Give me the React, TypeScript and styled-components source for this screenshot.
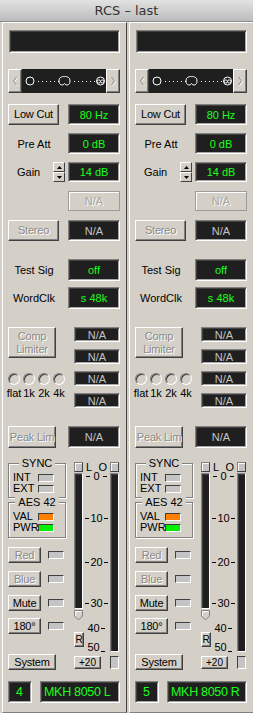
import React from "react";
import styled, { createGlobalStyle } from "styled-components";

const Global = createGlobalStyle`
  html, body { margin: 0; padding: 0; background: #d4d0c8; }
  body {
    width: 253px; height: 713px; overflow: hidden;
    font-family: "Liberation Sans", Arial, sans-serif; font-size: 11px; color: #000;
  }
  * { box-sizing: border-box; }
`;

const Window = styled.div`
  width: 253px; height: 713px; display: flex; flex-direction: column; background: #d4d0c8;
`;

const TitleBar = styled.div`
  height: 22px; flex: none;
  background: linear-gradient(#e2e2e2, #bcbcbc);
  border-bottom: 1px solid #8a8a8a;
  display: flex; align-items: center; justify-content: center;
  font-family: "DejaVu Sans", sans-serif; font-size: 13px; color: #333;
  padding-bottom: 1px;
`;

const Body = styled.div`
  flex: 1; display: flex;
`;

const Panel = styled.div`
  margin-left: 2px; width: 125px; height: 100%;
  border-left: 1px solid #fff; border-top: 1px solid #fff;
  border-right: 1px solid #404040; border-bottom: 1px solid #808080;
  padding: 7px 6px 0 5px;
  display: flex; flex-direction: column;
`;

const Row = styled.div<{ $mt: number; $end?: boolean }>`
  display: flex; align-items: center;
  justify-content: ${(p) => (p.$end ? "flex-end" : "space-between")};
  margin-top: ${(p) => p.$mt}px;
`;

const Display = styled.div<{ $w?: number; $h?: number; $dim?: boolean; $left?: boolean; $big?: boolean }>`
  width: ${(p) => p.$w ?? 52}px; height: ${(p) => p.$h ?? 21}px; flex: none;
  background: #1f1f1f;
  border: 1px solid; border-color: #808080 #fff #fff #808080;
  box-shadow: inset 1px 1px #404040, inset -1px -1px #a8a8a8;
  color: ${(p) => (p.$dim ? "#c4c4c4" : "#19ff19")};
  display: flex; align-items: center;
  justify-content: ${(p) => (p.$left ? "flex-start" : "center")};
  padding-left: ${(p) => (p.$left ? "3px" : "0")};
  font-size: ${(p) => (p.$big ? "12.5px" : "11px")};
  letter-spacing: ${(p) => (p.$big ? "-0.3px" : "0")};
  white-space: nowrap;
`;

const NameBox = styled(Display)`
  margin-left: 1px;
`;

const GhostBox = styled.div`
  width: 52px; height: 20px;
  border: 1px solid #9c9c9c;
  box-shadow: inset 1px 1px #fff;
  color: #a4a4a4; text-shadow: 1px 1px 0 #fff;
  display: flex; align-items: center; justify-content: center;
`;

const Btn = styled.button<{ $w: number; $h: number; $off?: boolean; $fs?: number }>`
  width: ${(p) => p.$w}px; height: ${(p) => p.$h}px; flex: none;
  margin: 0; padding: 0;
  background: #d4d0c8;
  border: 1px solid; border-color: #fff #404040 #404040 #fff;
  box-shadow: inset -1px -1px #808080;
  font-family: "Liberation Sans", Arial, sans-serif;
  font-size: ${(p) => p.$fs ?? 11}px; line-height: 13px;
  letter-spacing: -0.2px;
  white-space: nowrap;
  color: ${(p) => (p.$off ? "#8a8a8a" : "#000")};
  text-shadow: ${(p) => (p.$off ? "1px 1px 0 #fff" : "none")};
  display: flex; flex-direction: column; align-items: center; justify-content: center;
`;

const Label = styled.div`
  width: 52px; text-align: center;
`;

const GainGroup = styled.div`
  width: 57px; display: flex; align-items: center; justify-content: space-between;
  padding-left: 9px;
`;

const Spinner = styled.div`
  width: 12px; height: 20px; display: flex; flex-direction: column;
`;

const SpinHalf = styled.div`
  flex: 1; background: #d4d0c8;
  border: 1px solid; border-color: #fff #404040 #404040 #fff;
  display: flex; align-items: center; justify-content: center;
`;

const SliderRow = styled.div`
  margin-top: 16px; height: 24px; display: flex;
`;

const ArrowBtn = styled.div`
  width: 14px; height: 24px; background: #d4d0c8;
  border: 1px solid; border-color: #fff #404040 #404040 #fff;
  box-shadow: inset -1px -1px #808080;
  display: flex; align-items: center; justify-content: center;
`;

const SliderTrack = styled.div`
  width: 84px; height: 24px; background: #1f1f1f;
`;

const CompBlock = styled.div`
  margin-top: 18px; display: flex; justify-content: space-between;
`;

const CompLeft = styled.div`
  display: flex; flex-direction: column;
`;

const CompRight = styled.div`
  display: flex; flex-direction: column; gap: 7px;
`;

const Radios = styled.div`
  margin-top: 15px; display: flex; gap: 3px;
`;

const RadioItem = styled.div`
  width: 12px; display: flex; flex-direction: column; align-items: center;
`;

const Radio = styled.div`
  width: 12px; height: 12px; border-radius: 50%;
  border: 1px solid; border-color: #808080 #fff #fff #808080;
  box-shadow: inset 1px 1px #404040;
  background: #d4d0c8;
`;

const RadioLabel = styled.div`
  margin-top: 2px; line-height: 12px; white-space: nowrap;
`;

const LowerBlock = styled.div`
  margin-top: 11px; display: flex; gap: 6px; height: 211px;
`;

const LeftCol = styled.div`
  width: 58px; display: flex; flex-direction: column;
`;

const Group = styled.div<{ $mt: number; $h: number }>`
  margin-top: ${(p) => p.$mt}px; height: ${(p) => p.$h}px;
  border: 1px solid #808080;
  box-shadow: inset 1px 1px #fff, 1px 1px #fff;
  display: flex; flex-direction: column; padding: 0 0 0 4px;
`;

const Legend = styled.div`
  align-self: center; margin-top: -7px; margin-left: -4px;
  padding: 0 3px; line-height: 12px; background: #d4d0c8;
`;

const GroupRows = styled.div`
  margin-top: 3px; display: flex; flex-direction: column;
`;

const GroupRow = styled.div`
  height: 11px; display: flex; align-items: center;
`;

const GroupLabel = styled.div`
  width: 25px; line-height: 11px;
`;

const Indicator = styled.div<{ $c?: string; $w?: number; $h?: number }>`
  width: ${(p) => p.$w ?? 16}px; height: ${(p) => p.$h ?? 8}px; flex: none;
  background: ${(p) => p.$c ?? "#c4c4c4"};
  border: 1px solid; border-color: #404040 #fff #fff #404040;
`;

const BtnRow = styled.div<{ $mt: number }>`
  margin-top: ${(p) => p.$mt}px; display: flex; align-items: center; gap: 7px;
`;

const Meter = styled.div`
  width: 48px; display: grid;
  grid-template-columns: 2px 9px 27px 9px;
  grid-template-rows: 10px 179px 13px;
  row-gap: 0;
  padding-top: 3px;
`;

const TopSquare = styled.div<{ $col: number }>`
  grid-column: ${(p) => p.$col}; grid-row: 1;
  width: 9px; height: 10px; background: #c4c4c4;
  border: 1px solid; border-color: #808080 #404040 #404040 #808080;
  box-shadow: inset 1px 1px #fff;
`;

const LOHead = styled.div`
  grid-column: 3; grid-row: 1;
  display: flex; justify-content: space-between; padding: 0 3px;
  line-height: 10px; font-size: 11px;
`;

const LeftStack = styled.div`
  grid-column: 2; grid-row: 2; margin-top: 1px;
  display: flex; flex-direction: column; align-items: flex-start;
`;

const Bar = styled.div<{ $h: number }>`
  width: 9px; height: ${(p) => p.$h}px; background: #1f1f1f;
  border: 1px solid; border-color: #808080 #fff #fff #808080;
  box-shadow: inset 1px 1px #404040;
`;

const RightBar = styled(Bar)`
  grid-column: 4; grid-row: 2; margin-top: 1px;
`;

const Scale = styled.div`
  grid-column: 3; grid-row: 2; position: relative; margin-top: 1px;
`;

const Mark = styled.div`
  position: absolute; left: 0; right: 0; height: 12px;
  display: flex; align-items: center; justify-content: center;
  line-height: 12px; font-size: 11px; white-space: nowrap;
`;

const Tick = styled.span<{ $bottom?: boolean }>`
  display: inline-block; width: 4px; height: 1px; background: #000;
  margin: 0 1px;
  align-self: ${(p) => (p.$bottom ? "flex-end" : "center")};
  margin-bottom: ${(p) => (p.$bottom ? "1px" : "0")};
`;

const SmallBtn = styled.div<{ $w: number; $h: number }>`
  width: ${(p) => p.$w}px; height: ${(p) => p.$h}px; background: #d4d0c8;
  border: 1px solid; border-color: #fff #404040 #404040 #fff;
  box-shadow: inset -1px -1px #808080;
  display: flex; align-items: center; justify-content: center;
  font-size: 10px; line-height: 10px;
`;

const PlusBtn = styled(SmallBtn)`
  grid-column: 2 / span 2; grid-row: 3; margin-top: 5px;
`;

const CornerBox = styled(Indicator)`
  grid-column: 4; grid-row: 3; margin-top: 5px;
`;

const BottomRow = styled.div`
  margin-top: 11px; display: flex; justify-content: space-between;
`;

const Chevron = ({ left }: { left?: boolean }) => (
  <svg width="6" height="10" viewBox="0 0 6 10">
    <polyline
      points={left ? "4.5,1 1.5,5 4.5,9" : "1.5,1 4.5,5 1.5,9"}
      fill="none" stroke="#fff" strokeWidth="1" transform="translate(1,1)"
    />
    <polyline
      points={left ? "4.5,1 1.5,5 4.5,9" : "1.5,1 4.5,5 1.5,9"}
      fill="none" stroke="#8a8a8a" strokeWidth="1"
    />
  </svg>
);

const Tri = ({ up }: { up?: boolean }) => (
  <svg width="5" height="3" viewBox="0 0 5 3">
    <polygon points={up ? "2.5,0 5,3 0,3" : "0,0 5,0 2.5,3"} fill="#000" />
  </svg>
);

const PolarPattern = () => {
  const dots1 = [16, 20, 24, 28, 32, 36];
  const dots2 = [52, 56, 60, 64, 68, 72];
  return (
    <svg width="84" height="24" viewBox="0 0 84 24">
      <circle cx="8" cy="12" r="4" fill="none" stroke="#fff" strokeWidth="1" />
      {dots1.concat(dots2).map((x) => (
        <rect key={x} x={x} y="12" width="1" height="1" fill="#fff" />
      ))}
      <path
        d="M42.5,14.5 C41,17 37,16.5 37,12 C37,8.5 39.5,7.5 42.5,7.5 C45.5,7.5 48,8.5 48,12 C48,16.5 44,17 42.5,14.5 Z"
        fill="none" stroke="#fff" strokeWidth="1"
      />
      <circle cx="78.5" cy="12" r="4" fill="none" stroke="#fff" strokeWidth="1" />
      <circle cx="76.8" cy="12.5" r="1.6" fill="none" stroke="#fff" strokeWidth="0.9" />
      <circle cx="80.2" cy="12.5" r="1.6" fill="none" stroke="#fff" strokeWidth="0.9" />
    </svg>
  );
};

const Thumb = () => (
  <svg width="9" height="11" viewBox="0 0 9 11" style={{ marginTop: 1 }}>
    <polygon points="0.5,0.5 8.5,0.5 8.5,6 4.5,10 0.5,6" fill="#d4d0c8" stroke="#808080" />
    <polyline points="1.5,6 1.5,1.5 7.5,1.5" fill="none" stroke="#fff" />
  </svg>
);

const marks: { t: string; y: number; left: boolean; bottom?: boolean; gap?: boolean }[] = [
  { t: "0", y: -3, left: true, gap: true },
  { t: "10", y: 39, left: true },
  { t: "20", y: 83, left: true },
  { t: "30", y: 124, left: true },
  { t: "40", y: 149, left: false },
  { t: "50", y: 168, left: false, bottom: true },
];

const Strip = ({ num, name }: { num: string; name: string }) => (
  <Panel>
    <NameBox $w={111} $h={23} />
    <SliderRow>
      <ArrowBtn><Chevron left /></ArrowBtn>
      <SliderTrack><PolarPattern /></SliderTrack>
      <ArrowBtn><Chevron /></ArrowBtn>
    </SliderRow>
    <Row $mt={11}>
      <Btn $w={51} $h={21}>Low Cut</Btn>
      <Display>80 Hz</Display>
    </Row>
    <Row $mt={8}>
      <Label>Pre Att</Label>
      <Display>0 dB</Display>
    </Row>
    <Row $mt={8}>
      <GainGroup>
        <span>Gain</span>
        <Spinner>
          <SpinHalf><Tri up /></SpinHalf>
          <SpinHalf><Tri /></SpinHalf>
        </Spinner>
      </GainGroup>
      <Display $h={20}>14 dB</Display>
    </Row>
    <Row $mt={9} $end>
      <GhostBox>N/A</GhostBox>
    </Row>
    <Row $mt={9}>
      <Btn $w={51} $h={21} $off>Stereo</Btn>
      <Display $dim>N/A</Display>
    </Row>
    <Row $mt={18}>
      <Label>Test Sig</Label>
      <Display $h={22}>off</Display>
    </Row>
    <Row $mt={6}>
      <Label>WordClk</Label>
      <Display $h={22}>s 48k</Display>
    </Row>
    <CompBlock>
      <CompLeft>
        <Btn $w={48} $h={31} $off>
          <span>Comp</span>
          <span>Limiter</span>
        </Btn>
        <Radios>
          {["flat", "1k", "2k", "4k"].map((l) => (
            <RadioItem key={l}>
              <Radio />
              <RadioLabel>{l}</RadioLabel>
            </RadioItem>
          ))}
        </Radios>
      </CompLeft>
      <CompRight>
        {[0, 1, 2, 3].map((i) => (
          <Display key={i} $w={46} $h={15} $dim>N/A</Display>
        ))}
      </CompRight>
    </CompBlock>
    <Row $mt={18}>
      <Btn $w={48} $h={22} $off>Peak Lim</Btn>
      <Display $h={22} $dim>N/A</Display>
    </Row>
    <LowerBlock>
      <LeftCol>
        <Group $mt={4} $h={35}>
          <Legend>SYNC</Legend>
          <GroupRows>
            <GroupRow><GroupLabel>INT</GroupLabel><Indicator /></GroupRow>
            <GroupRow><GroupLabel>EXT</GroupLabel><Indicator /></GroupRow>
          </GroupRows>
        </Group>
        <Group $mt={4} $h={36}>
          <Legend>AES 42</Legend>
          <GroupRows>
            <GroupRow><GroupLabel>VAL</GroupLabel><Indicator $c="#ff7f00" /></GroupRow>
            <GroupRow><GroupLabel>PWR</GroupLabel><Indicator $c="#00f000" /></GroupRow>
          </GroupRows>
        </Group>
        <BtnRow $mt={9}><Btn $w={33} $h={16} $off>Red</Btn><Indicator /></BtnRow>
        <BtnRow $mt={8}><Btn $w={33} $h={16} $off>Blue</Btn><Indicator /></BtnRow>
        <BtnRow $mt={8}><Btn $w={33} $h={16}>Mute</Btn><Indicator /></BtnRow>
        <BtnRow $mt={7}><Btn $w={33} $h={16}>180°</Btn><Indicator /></BtnRow>
        <BtnRow $mt={20}><Btn $w={48} $h={16}>System</Btn></BtnRow>
      </LeftCol>
      <Meter>
        <TopSquare $col={2} />
        <LOHead><span>L</span><span>O</span></LOHead>
        <TopSquare $col={4} />
        <LeftStack>
          <Bar $h={136} />
          <Thumb />
          <SmallBtn $w={10} $h={15} style={{ marginTop: 11 }}>R</SmallBtn>
        </LeftStack>
        <Scale>
          {marks.map((m) => (
            <Mark key={m.t} style={{ top: m.y }}>
              {m.left && <Tick />}
              <span style={m.gap ? { margin: "0 2px" } : undefined}>{m.t}</span>
              <Tick $bottom={m.bottom} />
            </Mark>
          ))}
        </Scale>
        <RightBar $h={179} />
        <PlusBtn $w={27} $h={13}>+20</PlusBtn>
        <CornerBox $w={9} $h={13} />
      </Meter>
    </LowerBlock>
    <BottomRow>
      <Display $w={24} $h={22} $left $big style={{ paddingLeft: 7 }}>{num}</Display>
      <Display $w={80} $h={22} $left $big>{name}</Display>
    </BottomRow>
  </Panel>
);

export default function App() {
  return (
    <Window>
      <Global />
      <TitleBar>RCS – last</TitleBar>
      <Body>
        <Strip num="4" name="MKH 8050 L" />
        <Strip num="5" name="MKH 8050 R" />
      </Body>
    </Window>
  );
}
